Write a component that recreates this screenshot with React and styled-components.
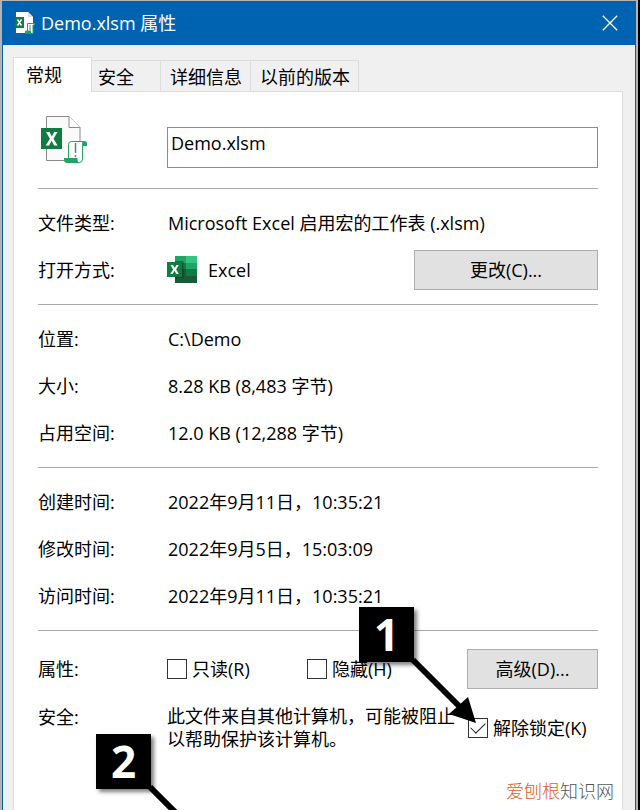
import React from "react";
import styled, { createGlobalStyle, css } from "styled-components";

const Global = createGlobalStyle`
  *, *::before, *::after { box-sizing: border-box; }
  body {
    margin: 0;
    background: #000;
    font: 18px/24px "Open Sans", "Noto Sans CJK SC", sans-serif;
    color: #000;
  }
  button, input { font: inherit; color: inherit; }
`;

const Screen = styled.div`
  position: relative;
  display: flex;
  min-height: 100vh;
  padding-right: 2px;
  overflow: hidden;
`;

const Dialog = styled.main`
  flex: 1;
  display: flex;
  flex-direction: column;
  border: solid #b4b4b4;
  border-width: 1px 2px 0;
  background: #f0f0f0;
`;

const TitleBar = styled.header`
  display: flex;
  align-items: center;
  gap: 6px;
  height: 44px;
  padding: 0 10px 0 13px;
  background: #0063b1;
  color: #fff;
`;

const Title = styled.h1`
  flex: 1;
  margin: 0;
  font-size: 18px;
  font-weight: 400;
`;

const CloseButton = styled.button`
  display: grid;
  place-items: center;
  width: 32px;
  height: 32px;
  padding: 0;
  border: 0;
  background: none;
`;

const Body = styled.div`
  flex: 1;
  display: flex;
  flex-direction: column;
  padding: 12px 12px 0 10px;
  border: solid #0063b1;
  border-width: 0 1px;
`;

const TabList = styled.div`
  display: flex;
  align-items: flex-end;
`;

const Tab = styled.button`
  height: 31px;
  padding: 1px 8px 0 9px;
  border: 1px solid #dcdcdc;
  border-width: 1px 1px 0 0;
  background: #f0f0f0;
  white-space: nowrap;
  ${(p) =>
    p.$wide &&
    css`
      padding: 1px 26px 0 6px;
    `}
  ${(p) =>
    p.$active &&
    css`
      position: relative;
      height: 35px;
      margin-bottom: -1px;
      padding: 0 29px 0 12px;
      border-left-width: 1px;
      background: #fff;
    `}
`;

const Panel = styled.section`
  flex: 1;
  padding: 24px 24px 40px;
  border: 1px solid #dcdcdc;
  border-bottom: 0;
  background: #fff;
`;

const FileHeader = styled.div`
  display: grid;
  grid-template-columns: 129px 1fr;
  align-items: end;
  margin-bottom: 20px;
`;

const NameInput = styled.input`
  width: 100%;
  height: 41px;
  padding: 0 3px 10px;
  border: 1px solid #8c8c8c;
  border-radius: 0;
  background: #fff;
`;

const Rule = styled.hr`
  height: 1px;
  margin: 11px 0 10px;
  border: 0;
  background: #a8a8a8;
`;

const Row = styled.div`
  display: grid;
  grid-template-columns: 129px 1fr auto;
  align-items: center;
  height: 47px;
`;

const Label = styled.span`
  white-space: nowrap;
`;

const Value = styled.span`
  padding-left: 1px;
  white-space: nowrap;
`;

const AppName = styled.span`
  display: flex;
  align-items: center;
  gap: 11px;
`;

const PushButton = styled.button`
  width: ${(p) => p.$width}px;
  height: 40px;
  padding: 0;
  border: 1px solid #adadad;
  background: #e1e1e1;
`;

const AttributeRow = styled.div`
  display: grid;
  grid-template-columns: 129px 140px 1fr 131px;
  align-items: center;
  height: 40px;
  margin-top: 18px;
`;

const SecurityRow = styled.div`
  display: grid;
  grid-template-columns: 129px 1fr 130px;
  align-items: start;
  margin-top: 16px;
`;

const Notice = styled.p`
  margin: 0;
  padding-right: 10px;
  line-height: 23px;
`;

const CheckLabel = styled.label`
  display: flex;
  align-items: center;
  gap: 5px;
  white-space: nowrap;
`;

const UnblockArea = styled.div`
  padding-top: 11px;
`;

const Check = styled.input`
  appearance: none;
  display: grid;
  place-items: center;
  flex: none;
  width: 20px;
  height: 20px;
  margin: 0;
  border: 1px solid #333;
  background: #fff;
  &:checked::after {
    content: "";
    width: 14px;
    height: 8px;
    margin-bottom: 4px;
    border: solid #222;
    border-width: 0 0 1px 1px;
    transform: rotate(-45deg);
  }
`;

const Callout = styled.div`
  position: absolute;
  left: ${(p) => p.$left}px;
  top: ${(p) => p.$top}px;
  display: grid;
  place-items: center;
  width: 55px;
  height: 55px;
  background: #000;
  color: #fff;
  box-shadow: 3px 3px 4px rgba(0, 0, 0, 0.5);
  font: 700 44px/55px "Open Sans", sans-serif;
`;

const Arrow = styled.svg`
  position: absolute;
  left: 50px;
  top: 50px;
`;

const Watermark = styled.div`
  position: absolute;
  right: 26px;
  bottom: 7px;
  color: #555;
  font-weight: 300;
`;

const WatermarkAccent = styled.span`
  color: #e0601c;
`;

function MacroFileIcon({ size = 52 }) {
  return (
    <svg width={size} height={size} viewBox="0 0 52 52" aria-hidden="true">
      <path d="M8.5.5H31l11 11V44.500H8.500Z" fill="#fafafa" stroke="#8a8a8a" />
      <path d="M31 .500V11.500H42" fill="#fff" stroke="#8a8a8a" />
      <rect x="3" y="12" width="21" height="21" fill="#107c41" />
      <path d="M8 16h3.500l2.300 4.500L16.200 16h3.300l-4 6.700 4.100 6.800h-3.500l-2.500-4.700-2.500 4.700H7.700l4.200-6.800Z" fill="#fff" />
      <path
        d="M30.500 42V28.500Q30.500 25.500 33.500 25.500H46Q44.500 26 44.500 29V43Q44.500 46.500 41.500 46.500H30Z"
        fill="#fff"
        stroke="#21a366"
      />
      <path d="M44.500 25H46q3 0 3 2.500V30h-4.500Z" fill="#21a366" />
      <path d="M26 42H39.500v2q0 2.500 2 3H29.500Q26 47 26 43.500Z" fill="#21a366" />
      <path d="M37.500 27v10M37.500 39v2" stroke="#777" strokeWidth="1.500" />
    </svg>
  );
}

function TitleFileIcon() {
  return (
    <svg width="20" height="24" viewBox="0 0 20 24" aria-hidden="true">
      <path d="M1 1H13l5 5V22H1Z" fill="#fff" />
      <path d="M13 1v5h5" fill="#ddd" />
      <path d="M0 6h9v11H0Z" fill="#107c41" />
      <path d="m2.500 8.500 4 6m0-6-4 6" stroke="#fff" strokeWidth="1.400" />
      <path d="M12.500 21V12.500H19.500V14H18V22.500H11V20h5" fill="#fff" stroke="#21a366" />
      <path d="M10 20h6v3h-6Z" fill="#21a366" />
      <path d="M15 14v5" stroke="#777" />
    </svg>
  );
}

function ExcelIcon() {
  return (
    <svg width="30" height="27" viewBox="0 0 30 27" aria-hidden="true">
      <path d="M8 0h11v7H8Z" fill="#21a366" />
      <path d="M19 0h11v7H19Z" fill="#33c481" />
      <path d="M8 7h11v6.500H8Z" fill="#107c41" />
      <path d="M19 7h11v6.500H19Z" fill="#21a366" />
      <path d="M8 13h22v14H8Z" fill="#185c37" />
      <path d="M19 13h11v7H19Z" fill="#107c41" />
      <path d="M8 5h8.500v17H8Z" fill="#000" opacity=".3" />
      <rect y="6" width="15" height="15" fill="#107c41" />
      <path d="M3.500 9h2.600l1.600 3 1.700-3h2.400L9.100 13.500 11.900 18H9.300l-1.800-3.200L5.700 18H3.200l2.900-4.500Z" fill="#fff" />
    </svg>
  );
}

function InfoRow({ label, children }) {
  return (
    <Row>
      <Label>{label}:</Label>
      <Value>{children}</Value>
    </Row>
  );
}

export default function App() {
  return (
    <>
      <Global />
      <Screen>
        <Dialog>
          <TitleBar>
            <TitleFileIcon />
            <Title>Demo.xlsm 属性</Title>
            <CloseButton aria-label="关闭">
              <svg width="16" height="16" viewBox="0 0 16 16" stroke="#fff" strokeWidth="1.300">
                <path d="m.8.8 14.400 14.400M15.200.8.8 15.200" />
              </svg>
            </CloseButton>
          </TitleBar>
          <Body>
            <TabList role="tablist">
              <Tab role="tab" aria-selected="true" $active>常规</Tab>
              <Tab role="tab" aria-selected="false" $wide>安全</Tab>
              <Tab role="tab" aria-selected="false">详细信息</Tab>
              <Tab role="tab" aria-selected="false">以前的版本</Tab>
            </TabList>
            <Panel role="tabpanel">
              <FileHeader>
                <MacroFileIcon />
                <NameInput aria-label="文件名" defaultValue="Demo.xlsm" />
              </FileHeader>
              <Rule />
              <InfoRow label="文件类型">Microsoft Excel 启用宏的工作表 (.xlsm)</InfoRow>
              <Row>
                <Label>打开方式:</Label>
                <AppName>
                  <ExcelIcon />
                  Excel
                </AppName>
                <PushButton $width={184}>更改(C)...</PushButton>
              </Row>
              <Rule />
              <InfoRow label="位置">C:\Demo</InfoRow>
              <InfoRow label="大小">8.28 KB (8,483 字节)</InfoRow>
              <InfoRow label="占用空间">12.0 KB (12,288 字节)</InfoRow>
              <Rule />
              <InfoRow label="创建时间">2022年9月11日，10:35:21</InfoRow>
              <InfoRow label="修改时间">2022年9月5日，15:03:09</InfoRow>
              <InfoRow label="访问时间">2022年9月11日，10:35:21</InfoRow>
              <Rule />
              <AttributeRow>
                <Label>属性:</Label>
                <CheckLabel>
                  <Check type="checkbox" />
                  只读(R)
                </CheckLabel>
                <CheckLabel>
                  <Check type="checkbox" />
                  隐藏(H)
                </CheckLabel>
                <PushButton $width={131}>高级(D)...</PushButton>
              </AttributeRow>
              <SecurityRow>
                <Label>安全:</Label>
                <Notice>此文件来自其他计算机，可能被阻止以帮助保护该计算机。</Notice>
                <UnblockArea>
                  <CheckLabel>
                    <Check type="checkbox" defaultChecked />
                    解除锁定(K)
                  </CheckLabel>
                </UnblockArea>
              </SecurityRow>
            </Panel>
          </Body>
        </Dialog>
        <Callout $left={359} $top={607}>
          1
          <Arrow width="70" height="70" viewBox="0 0 70 70" aria-hidden="true">
            <path d="M4 3 51 50" stroke="#000" strokeWidth="6" />
            <path d="M67 66 59 40 40 57Z" />
          </Arrow>
        </Callout>
        <Callout $left={96} $top={734}>
          2
          <Arrow width="70" height="70" viewBox="0 0 70 70" aria-hidden="true">
            <path d="M4 3 60 59" stroke="#000" strokeWidth="6" />
          </Arrow>
        </Callout>
        <Watermark>
          <WatermarkAccent>爱刨根</WatermarkAccent>知识网
        </Watermark>
      </Screen>
    </>
  );
}
